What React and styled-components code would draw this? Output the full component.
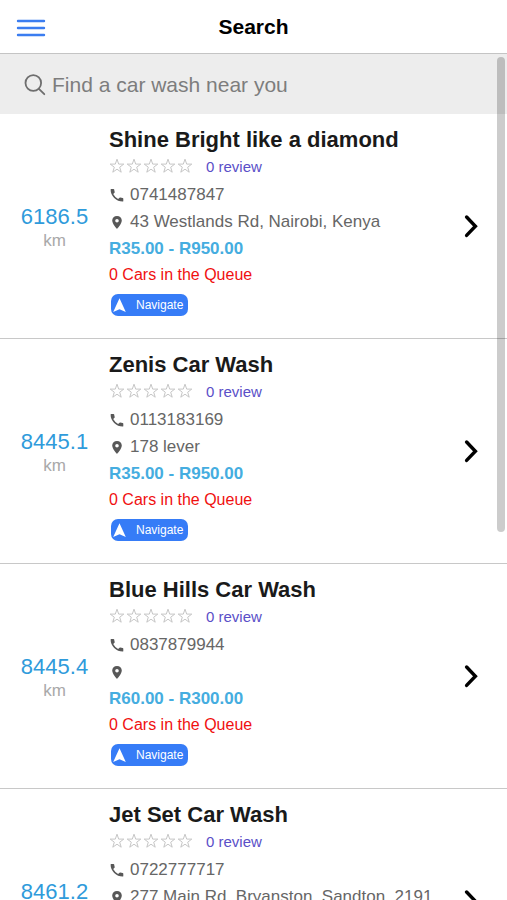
import React from 'react';
import styled, { createGlobalStyle } from 'styled-components';

const GlobalStyle = createGlobalStyle`
  * {
    box-sizing: border-box;
  }

  body {
    margin: 0;
    background: #fff;
    color: #1a1a1a;
    font-family: "Liberation Sans", Arial, sans-serif;
  }
`;

const Screen = styled.div`
  display: flex;
  flex-direction: column;
  height: 100vh;
`;

const Header = styled.header`
  display: grid;
  grid-template-columns: 1fr auto 1fr;
  align-items: center;
  flex: none;
  height: 54px;
  padding: 0 16px;
  border-bottom: 1px solid #c4c4c4;
`;

const MenuButton = styled.button`
  display: flex;
  justify-self: start;
  padding: 2px 0 0;
  border: 0;
  background: none;
  color: #3b7df0;
`;

const PageTitle = styled.h1`
  margin: 0;
  color: #000;
  font-size: 21px;
  line-height: 24px;
`;

const Content = styled.main`
  position: relative;
  flex: 1;
  min-height: 0;
`;

const Scroller = styled.div`
  height: 100%;
  overflow-y: auto;
  scrollbar-width: none;
`;

const ScrollThumb = styled.div`
  position: absolute;
  top: 3px;
  right: 2px;
  width: 8px;
  height: 475px;
  border-radius: 4px;
  background: rgba(0, 0, 0, 0.2);
  pointer-events: none;
`;

const SearchBar = styled.label`
  display: flex;
  align-items: center;
  gap: 6px;
  height: 60px;
  padding: 2px 24px 0;
  background: #ededed;
  color: #6e6e6e;
`;

const SearchInput = styled.input`
  flex: 1;
  min-width: 0;
  padding: 0;
  border: 0;
  outline: 0;
  background: none;
  color: #333;
  font-family: inherit;
  font-size: 21px;
  line-height: 28px;

  &::placeholder {
    color: #7d7d7d;
    opacity: 1;
  }
`;

const List = styled.ul`
  margin: 0;
  padding: 0;
  list-style: none;
`;

const Row = styled.li`
  display: grid;
  grid-template-columns: 109px 1fr 43px;
  align-items: center;
  border-bottom: 1px solid #c8c8c8;
`;

const Distance = styled.div`
  padding-top: 4px;
  color: #2f9bdb;
  font-size: 22px;
  line-height: 26px;
  text-align: center;
`;

const Unit = styled.div`
  color: #a9a9a9;
  font-size: 17px;
  line-height: 22px;
`;

const Details = styled.div`
  min-width: 0;
  padding: 11px 0 22px;
  white-space: nowrap;
`;

const Name = styled.h2`
  margin: 0;
  font-size: 22px;
  line-height: 30px;
`;

const Rating = styled.div`
  display: flex;
  align-items: center;
  gap: 13px;
  height: 22px;
`;

const Stars = styled.div`
  display: flex;
  gap: 1px;
  color: #c6c6c6;
`;

const ReviewLink = styled.a`
  color: #5a4fc8;
  font-size: 15px;
  text-decoration: none;
`;

const Contact = styled.div`
  margin: 4px 0 1px;
`;

const Info = styled.div`
  display: flex;
  align-items: center;
  gap: 4px;
  height: 27px;
  color: #666;
  font-size: 17px;

  svg {
    flex: none;
    color: #585858;
  }
`;

const Line = styled.div`
  color: ${({ $color }) => $color};
  font-size: ${({ $size }) => $size}px;
  font-weight: ${({ $bold }) => ($bold ? 'bold' : 'normal')};
  line-height: 26px;
`;

const NavigateButton = styled.button`
  display: flex;
  align-items: center;
  gap: 9px;
  height: 22px;
  margin: 6px 0 0 2px;
  padding: 0 5px 0 2px;
  border: 0;
  border-radius: 7px;
  background: #367cf7;
  color: #fff;
  font-family: inherit;
  font-size: 12px;
`;

const OpenButton = styled.button`
  display: flex;
  padding: 0;
  border: 0;
  background: none;
  color: #000;
`;

const MenuIcon = () => (
  <svg width="30" height="18" viewBox="0 0 30 18" stroke="currentColor" strokeWidth="2.4" strokeLinecap="round">
    <path d="M2 2h26M2 9h26M2 16h26" />
  </svg>
);

const SearchIcon = () => (
  <svg width="22" height="22" viewBox="0 0 22 22" fill="none" stroke="currentColor" strokeWidth="1.8" strokeLinecap="round">
    <circle cx="9.3" cy="9" r="7.8" />
    <path d="M14.9 14.8l5.4 5.4" />
  </svg>
);

const StarIcon = () => (
  <svg width="16" height="16" viewBox="0 0 16 16" fill="none" stroke="currentColor">
    <path d="M8 1.2l1.7 4.9h5.1l-4.1 3.1 1.5 5L8 11.2l-4.2 3 1.5-5L1.2 6.1h5.1z" />
  </svg>
);

const PhoneIcon = () => (
  <svg width="17" height="17" viewBox="0 0 17 17" fill="currentColor">
    <path d="M2.2 3h2.3q.6 0 .7.6.1 1.3.5 2.4.1.4-.2.8L4.2 8.1q1.7 3.2 4.9 4.900l1.400-1.300q.4-.3.8-.2 1.100.4 2.400.5.6.1.6.7V15q0 .6-.6.6-4.900 0-8.500-3.600T1.600 3.600Q1.600 3 2.200 3z" />
  </svg>
);

const PinIcon = () => (
  <svg width="17" height="17" viewBox="0 0 17 17" fill="currentColor" fillRule="evenodd">
    <path d="M8 3C5.200 3 3.200 5 3.200 7.600 3.200 11 8 16 8 16s4.800-5 4.800-8.400C12.800 5 10.800 3 8 3zm0 2.900a1.800 1.800 0 1 1 0 3.600 1.800 1.800 0 0 1 0-3.600z" />
  </svg>
);

const NavigateIcon = () => (
  <svg width="14" height="16" viewBox="0 0 14 16" fill="currentColor">
    <path d="M6.500 1.300L12.800 15 6.500 12.200.2 15z" />
  </svg>
);

const ChevronIcon = () => (
  <svg width="14" height="24" viewBox="0 0 14 24" fill="none" stroke="currentColor" strokeWidth="3.4" strokeLinecap="round">
    <path d="M2.600 3L11.400 12.200l-8.800 9.200" />
  </svg>
);

const CAR_WASHES = [
  { name: 'Shine Bright like a diamond', distance: '6186.5', phone: '0741487847', address: '43 Westlands Rd, Nairobi, Kenya', price: 'R35.00 - R950.00' },
  { name: 'Zenis Car Wash', distance: '8445.1', phone: '0113183169', address: '178 lever', price: 'R35.00 - R950.00' },
  { name: 'Blue Hills Car Wash', distance: '8445.4', phone: '0837879944', address: '', price: 'R60.00 - R300.00' },
  { name: 'Jet Set Car Wash', distance: '8461.2', phone: '0722777717', address: '277 Main Rd, Bryanston, Sandton, 2191', price: 'R60.00 - R300.00' },
];

const CarWash = ({ name, distance, phone, address, price }) => (
  <Row>
    <Distance>
      {distance}
      <Unit>km</Unit>
    </Distance>
    <Details>
      <Name>{name}</Name>
      <Rating>
        <Stars>
          {[1, 2, 3, 4, 5].map((star) => <StarIcon key={star} />)}
        </Stars>
        <ReviewLink href="#reviews">0 review</ReviewLink>
      </Rating>
      <Contact>
        <Info><PhoneIcon />{phone}</Info>
        <Info><PinIcon />{address}</Info>
      </Contact>
      <Line $color="#45ade0" $size={17} $bold>{price}</Line>
      <Line $color="#f01010" $size={16}>0 Cars in the Queue</Line>
      <NavigateButton type="button"><NavigateIcon />Navigate</NavigateButton>
    </Details>
    <OpenButton type="button" aria-label={name}><ChevronIcon /></OpenButton>
  </Row>
);

const App = () => (
  <Screen>
    <GlobalStyle />
    <Header>
      <MenuButton type="button" aria-label="Menu"><MenuIcon /></MenuButton>
      <PageTitle>Search</PageTitle>
    </Header>
    <Content>
      <Scroller>
        <SearchBar>
          <SearchIcon />
          <SearchInput type="text" aria-label="Find a car wash near you" placeholder="Find a car wash near you" />
        </SearchBar>
        <List>
          {CAR_WASHES.map((carWash) => <CarWash key={carWash.name} {...carWash} />)}
        </List>
      </Scroller>
      <ScrollThumb />
    </Content>
  </Screen>
);

export default App;
